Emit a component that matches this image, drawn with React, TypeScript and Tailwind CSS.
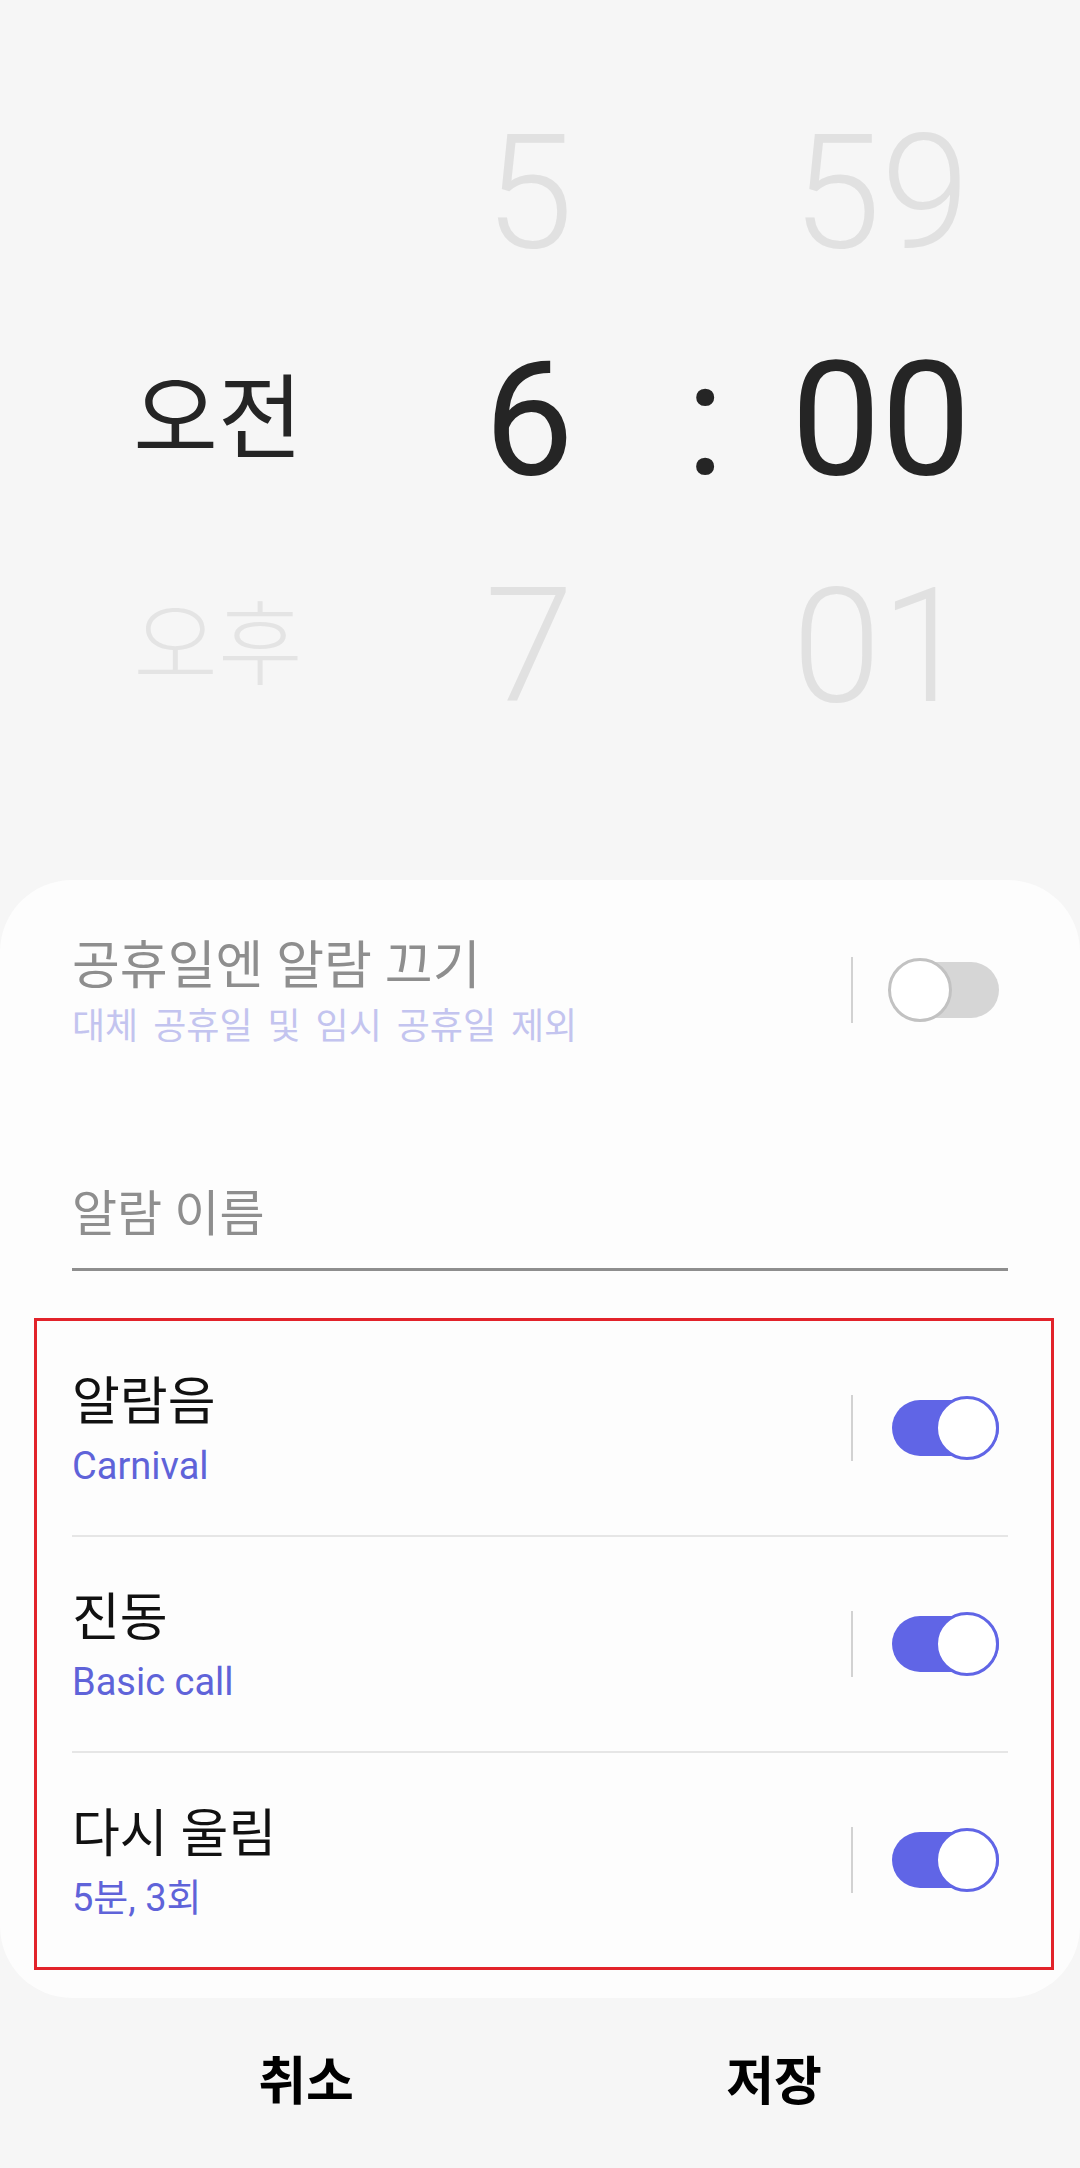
import React from 'react';

const FONT = "font-[Roboto,'Noto_Sans_CJK_KR',sans-serif]";

function Toggle({ on }: { on: boolean }) {
  return (
    <div className="relative flex h-[66px] w-[111px] items-center">
      {on ? (
        <>
          <div className="ml-[4px] h-[56px] w-[107px] rounded-full bg-[#6065e6]" />
          <div className="absolute top-[1px] right-0 h-[64px] w-[64px] rounded-full border-[3px] border-[#6065e6] bg-white" />
        </>
      ) : (
        <>
          <div className="ml-[5px] h-[56px] w-[106px] rounded-full bg-[#d6d6d6]" />
          <div className="absolute top-[1px] left-0 h-[64px] w-[64px] rounded-full border-[3px] border-[#c2c2c2] bg-white" />
        </>
      )}
    </div>
  );
}

function SwitchRow({
  title,
  sub,
  on,
}: {
  title: string;
  sub: string;
  on: boolean;
}) {
  return (
    <div className="flex h-[214px] items-center">
      <div className="flex flex-1 flex-col pt-[7px]">
        <span className="text-[52px] leading-[58px] text-[#111111]">{title}</span>
        <span className="mt-[11px] text-[38px] leading-[46px] text-[#5f63d9]">{sub}</span>
      </div>
      <div className="h-[66px] w-[2px] bg-[#d2d2d2]" />
      <div className="ml-[35px] mr-[9px]">
        <Toggle on={on} />
      </div>
    </div>
  );
}

export default function App() {
  return (
    <div className={`${FONT} flex h-[2168px] w-[1080px] flex-col bg-[#f6f6f6]`}>
      {/* time picker */}
      <div className="grid h-[880px] shrink-0 grid-cols-[436px_186px_166px_186px] grid-rows-[227px_227px_227px] pt-[79px]">
        <div />
        <div className="flex items-center justify-center text-[160px] font-light leading-none text-[#e1e1e1]">5</div>
        <div />
        <div className="flex items-center justify-center text-[160px] font-light leading-none text-[#e1e1e1]">59</div>

        <div className="flex items-center justify-center text-[92px] leading-none text-[#252525]">오전</div>
        <div className="flex items-center justify-center text-[160px] leading-none text-[#252525]">6</div>
        <div className="flex items-center justify-center text-[160px] leading-none text-[#252525]">:</div>
        <div className="flex items-center justify-center text-[160px] leading-none text-[#252525]">00</div>

        <div className="flex items-center justify-center text-[92px] font-light leading-none text-[#e4e4e4]">오후</div>
        <div className="flex items-center justify-center text-[160px] font-light leading-none text-[#e1e1e1]">7</div>
        <div />
        <div className="flex items-center justify-center text-[160px] font-light leading-none text-[#e1e1e1]">01</div>
      </div>

      {/* settings card */}
      <div className="flex shrink-0 flex-col rounded-[72px] bg-[#fdfdfd] pb-[28px] pl-[34px] pr-[26px] pt-[50px]">
        <div className="flex flex-col pl-[38px] pr-[46px]">
          <div className="flex items-center">
            <div className="flex flex-1 flex-col pt-[8px]">
              <span className="text-[52px] leading-[58px] text-[#8e8e8e]">공휴일엔 알람 끄기</span>
              <span className="mt-[8px] text-[36px] leading-[46px] text-[#c3c4ef] [word-spacing:6px]">
                대체 공휴일 및 임시 공휴일 제외
              </span>
            </div>
            <div className="h-[66px] w-[2px] bg-[#d2d2d2]" />
            <div className="ml-[35px] mr-[9px]">
              <Toggle on={false} />
            </div>
          </div>

          <div className="mt-[135px] border-b-[3px] border-[#8e8e8e] pb-[23px]">
            <span className="text-[49px] leading-[60px] text-[#8e8e8e]">알람 이름</span>
          </div>
        </div>

        <div className="mt-[47px] flex flex-col border-[3px] border-[#e2232a] pl-[35px] pr-[43px]">
          <SwitchRow title="알람음" sub="Carnival" on />
          <div className="h-[2px] bg-[#e6e6e6]" />
          <SwitchRow title="진동" sub="Basic call" on />
          <div className="h-[2px] bg-[#e6e6e6]" />
          <SwitchRow title="다시 울림" sub="5분, 3회" on />
        </div>
      </div>

      {/* buttons */}
      <div className="grid h-[170px] shrink-0 grid-cols-2 px-[72px]">
        <button className="flex items-center justify-center text-[52px] font-bold text-black">취소</button>
        <button className="flex items-center justify-center text-[52px] font-bold text-black">저장</button>
      </div>
    </div>
  );
}
